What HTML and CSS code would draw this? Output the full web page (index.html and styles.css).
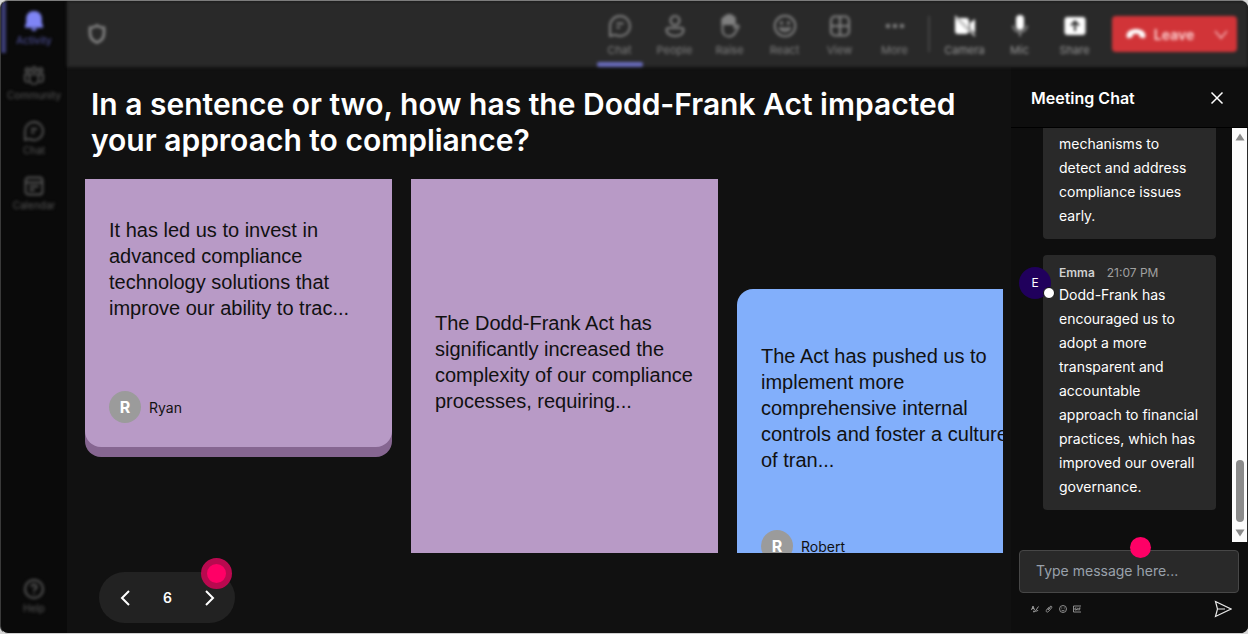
FILE: index.html
```
<!DOCTYPE html>
<html lang="en">
  <head>
    <meta charset="UTF-8" />
    <meta name="viewport" content="width=device-width, initial-scale=1.0" />
    <title>Meeting</title>
    <link rel="stylesheet" href="styles.css">
  </head>
  <body>
    <div class="app">
      <nav class="sidebar">
        <button class="nav-item active">
          <svg class="icon" viewBox="0 0 20 20" fill="currentColor"><path d="M10 0C5.200 0 2.200 3.500 2.200 7.500v4.300L.9 15.300c-.3.800.1 1.400.9 1.400h16.400c.8 0 1.200-.6.9-1.400L17.800 11.800V7.500C17.800 3.500 14.800 0 10 0zM7 17.500c.4 1.600 1.500 2.500 3 2.500s2.600-.9 3-2.500z"/></svg>
          <span>Activity</span>
        </button>
        <button class="nav-item">
          <svg class="icon" viewBox="0 0 20 20" fill="none" stroke="currentColor" stroke-width="1.700"><circle cx="3.500" cy="4" r="2"/><circle cx="10" cy="3.500" r="2.300"/><circle cx="16.500" cy="4" r="2"/><path d="M5.500 8.500h9v5a4.500 4.500 0 0 1-9 0zM5.500 8.500H.8V13c0 2.500 2 3.500 4 3.200M14.500 8.500h4.700V13c0 2.500-2 3.500-4 3.200"/></svg>
          <span>Community</span>
        </button>
        <button class="nav-item">
          <svg class="icon" viewBox="0 0 20 20" fill="none" stroke="currentColor" stroke-width="1.800"><path d="M10 1a9 9 0 1 1-4.300 16.900L1 19V10A9 9 0 0 1 10 1zM7 8h6M7 11.500h3.500"/></svg>
          <span>Chat</span>
        </button>
        <button class="nav-item">
          <svg class="icon" viewBox="0 0 20 20" fill="none" stroke="currentColor" stroke-width="1.800"><rect x="1.500" y="1.500" width="17" height="17" rx="3"/><path d="M1.500 6.500h17M5.500 10.500h9M5.500 14h5"/></svg>
          <span>Calendar</span>
        </button>
        <button class="nav-item help">
          <svg class="icon" viewBox="0 0 20 20" fill="none" stroke="currentColor" stroke-width="2"><circle cx="10" cy="10" r="9"/><path d="M7.500 8a2.500 2.500 0 1 1 3.500 2.200c-.8.400-1 .9-1 1.800M10 13.800v1.500"/></svg>
          <span>Help</span>
        </button>
      </nav>

      <div class="main">
        <header class="toolbar">
          <svg class="shield" viewBox="0 0 20 20" fill="none" stroke="currentColor" stroke-width="2.600"><path d="M10 1.500c2 1.500 4.300 2.200 7 2.300V9c0 4.800-2.500 7.800-7 9.500C5.500 16.800 3 13.800 3 9V3.800c2.700-.1 5-.8 7-2.300z"/></svg>

          <button class="tool selected">
            <svg class="tool-icon" viewBox="0 0 24 24" fill="none" stroke="currentColor" stroke-width="2"><path d="M12 2a10 10 0 1 1-4.800 18.800L2 22V12A10 10 0 0 1 12 2zM8.500 9.500h7M8.500 13.500H12"/></svg>
            <span>Chat</span>
          </button>
          <button class="tool">
            <svg class="tool-icon" viewBox="0 0 24 24" fill="none" stroke="currentColor" stroke-width="2.200"><circle cx="12" cy="6.500" r="4.500"/><path d="M5.500 14h13c1.200 0 2 .8 2 2 0 3.800-3.500 6-8.500 6s-8.500-2.200-8.500-6c0-1.200.8-2 2-2z"/></svg>
            <span>People</span>
          </button>
          <button class="tool">
            <svg class="tool-icon" viewBox="0 0 24 24" fill="none" stroke="currentColor" stroke-width="2" stroke-linejoin="round"><path d="M4.500 12V5.500a1.500 1.500 0 0 1 3 0V3.500a1.500 1.500 0 0 1 3 0V2.800a1.500 1.500 0 0 1 3 0V4.500a1.500 1.500 0 0 1 3 0V14l2-2.200c1.200-1.200 2.800 0 2 1.400L17 19c-1.500 2.400-3.300 3.500-6 3.500-4 0-6.500-2.700-6.500-6.500z"/><path d="M4.500 5.500l3-3 3-1.500 3 .500 3 2.500V10h-12z" fill="currentColor"/></svg>
            <span>Raise</span>
          </button>
          <button class="tool">
            <svg class="tool-icon" viewBox="0 0 24 24" fill="none" stroke="currentColor" stroke-width="2"><circle cx="12" cy="12" r="10.300"/><path d="M7 14.500c2.500 3.500 7.500 3.500 10 0z"/><circle cx="8.500" cy="9" r=".8"/><circle cx="15.500" cy="9" r=".8"/></svg>
            <span>React</span>
          </button>
          <button class="tool">
            <svg class="tool-icon" viewBox="0 0 24 24" fill="none" stroke="currentColor" stroke-width="2.200"><rect x="3" y="2.500" width="18" height="19" rx="4"/><path d="M12 3v18M3 12h18"/></svg>
            <span>View</span>
          </button>
          <button class="tool">
            <svg class="tool-icon" viewBox="0 0 24 24" fill="currentColor"><circle cx="5" cy="12" r="2.300"/><circle cx="12" cy="12" r="2.300"/><circle cx="19" cy="12" r="2.300"/></svg>
            <span>More</span>
          </button>

          <div class="divider"></div>

          <button class="tool device">
            <svg class="tool-icon" viewBox="0 0 24 24" fill="currentColor"><path d="M5.500 4H13a3 3 0 0 1 3 3v7.500zM2 3.500 16 17.600A3 3 0 0 1 13 20H5a3 3 0 0 1-3-3zM17 9l5-4v14l-5-4z"/><path d="M2 2l20 20" stroke="currentColor" stroke-width="1.200"/></svg>
            <span>Camera</span>
          </button>
          <button class="tool device">
            <svg class="tool-icon" viewBox="0 0 24 24" fill="currentColor"><rect x="8" y="1" width="8" height="15" rx="4"/><path d="M5 11.500c0 4 3 6.500 7 6.500s7-2.500 7-6.500M12 18v4.500" fill="none" stroke="#a0a0a0" stroke-width="1.600"/></svg>
            <span>Mic</span>
          </button>
          <button class="tool device">
            <svg class="tool-icon" viewBox="0 0 24 24"><rect x="1.500" y="3" width="21" height="18" rx="3" fill="currentColor"/><path d="M12 17V8M8 11.500l4-4 4 4" fill="none" stroke="#292929" stroke-width="2"/></svg>
            <span>Share</span>
          </button>

          <div class="leave-group">
            <button class="leave">
              <svg class="phone" viewBox="0 0 20 12" fill="currentColor"><path d="M10 1c5 0 9 2.300 9.500 6 .2 1.800-.7 3.500-2.200 3.200l-2.600-.6c-.9-.2-1.400-.9-1.500-1.800L13 6.300c-2-.7-4-.7-6 0l-.2 1.500c-.1.900-.6 1.600-1.500 1.800l-2.600.6C1.200 10.500.3 8.800.5 7 1 3.300 5 1 10 1z"/></svg>
              <span>Leave</span>
            </button>
            <button class="leave-menu" aria-label="Leave options">
              <svg class="caret" viewBox="0 0 14 14" fill="none" stroke="currentColor" stroke-width="1.800"><path d="M1 4l6 7 6-7"/></svg>
            </button>
          </div>
        </header>

        <div class="content">
          <main class="stage">
            <h1>In a sentence or two, how has the Dodd-Frank Act impacted your approach to compliance?</h1>

            <div class="board">
              <article class="card card-ryan">
                <p>It has led us to invest in advanced compliance technology solutions that improve our ability to trac...</p>
                <div class="author"><span class="initial">R</span>Ryan</div>
              </article>
              <article class="card card-middle">
                <p>The Dodd-Frank Act has significantly increased the complexity of our compliance processes, requiring...</p>
              </article>
              <article class="card card-robert">
                <p>The Act has pushed us to implement more comprehensive internal controls and foster a culture of tran...</p>
                <div class="author"><span class="initial">R</span>Robert</div>
              </article>
            </div>

            <div class="pager">
              <button class="page-btn" aria-label="Previous">
                <svg class="chevron" viewBox="0 0 18 18" fill="none" stroke="currentColor" stroke-width="2"><path d="M13 2L6 9l7 7"/></svg>
              </button>
              <span class="page-number">6</span>
              <button class="page-btn" aria-label="Next">
                <svg class="chevron" viewBox="0 0 18 18" fill="none" stroke="currentColor" stroke-width="2"><path d="M5 2l7 7-7 7"/></svg>
              </button>
              <span class="hotspot ringed"></span>
            </div>
          </main>

          <aside class="chat">
            <div class="chat-header">
              <h2>Meeting Chat</h2>
              <button class="close-btn" aria-label="Close chat">
                <svg class="close-icon" viewBox="0 0 14 14" fill="none" stroke="currentColor" stroke-width="1.500"><path d="M1.500 1.500l11 11M12.500 1.500l-11 11"/></svg>
              </button>
            </div>

            <div class="chat-body">
              <div class="messages">
                <div class="bubble continued">
                  <p>mechanisms to detect and address compliance issues early.</p>
                </div>
                <div class="bubble">
                  <span class="chat-avatar">E<i class="status"></i></span>
                  <div class="meta"><b>Emma</b><span>21:07 PM</span></div>
                  <p>Dodd-Frank has encouraged us to adopt a more transparent and accountable approach to financial practices, which has improved our overall governance.</p>
                </div>
              </div>
              <div class="scrollbar">
                <svg class="arrow" viewBox="0 0 10 8" fill="currentColor"><path d="M5 0.500L9.500 7.500H.5z"/></svg>
                <div class="thumb"></div>
                <svg class="arrow" viewBox="0 0 10 8" fill="currentColor"><path d="M5 7.500L.5.500h9z"/></svg>
              </div>
            </div>

            <form class="composer">
              <div class="field">
                <input type="text" placeholder="Type message here..." aria-label="Message">
                <span class="hotspot"></span>
              </div>
              <div class="composer-tools">
                <button type="button" class="mini" aria-label="Format">
                  <svg class="mini-icon" viewBox="0 0 16 16" fill="none" stroke="currentColor" stroke-width="2"><path d="M1 10l3-8 3 8M2 7h4M15 3L8 13l-3 1 1-3M9 13c2-2 3 1 5-3"/></svg>
                </button>
                <button type="button" class="mini" aria-label="Attach">
                  <svg class="mini-icon" viewBox="0 0 16 16" fill="none" stroke="currentColor" stroke-width="1.800"><path d="M4 9l6-6c3-2 5 1 3 3l-6 7c-3 3-6 0-4-3l6-6M6 10l5-5"/></svg>
                </button>
                <button type="button" class="mini" aria-label="Emoji">
                  <svg class="mini-icon" viewBox="0 0 16 16" fill="none" stroke="currentColor" stroke-width="1.800"><circle cx="8" cy="8" r="7"/><path d="M4.500 9.500c2 3 5 3 7 0M4.500 6h2M9.500 6h2"/></svg>
                </button>
                <button type="button" class="mini" aria-label="GIF">
                  <svg class="mini-icon" viewBox="0 0 16 16" fill="none" stroke="currentColor" stroke-width="1.800"><path d="M16 2H1v12h15M7 6H4v4h3V8M9.500 5.500v5M12 11V6h3M12 8h2.500"/></svg>
                </button>
                <button class="send" aria-label="Send">
                  <svg class="send-icon" viewBox="0 0 18 18" fill="none" stroke="currentColor" stroke-width="1.200"><path d="M1.500 1.500L17 9 1.500 16.500l2-7.500zM3.500 9H11"/></svg>
                </button>
              </div>
            </form>
          </aside>
        </div>
      </div>
    </div>
  </body>
</html>
```
FILE: styles.css
```
* {
  box-sizing: border-box;
}
body {
  margin: 0;
  background-color: #d8d8d8;
  color: white;
  font-family: Inter, "Liberation Sans", sans-serif;
}
h1,
h2,
p {
  margin: 0;
}
button {
  padding: 0;
  border: none;
  background: none;
  color: inherit;
  font-family: inherit;
  cursor: pointer;
}
svg {
  display: block;
  flex: none;
}
.app {
  display: flex;
  height: 100vh;
  border-top: 1px solid #7c7c7c;
  border-left: 1px solid #3a3a3a;
  border-bottom: 1px solid #d0d0d0;
  border-radius: 8px;
  overflow: hidden;
  background-color: #0a0a0a;
}

/* the rail and toolbar are out of focus */
.sidebar,
.toolbar {
  filter: blur(1px) blur(1px);
}
.sidebar {
  width: 66px;
  flex: none;
  display: flex;
  flex-direction: column;
  padding-bottom: 9px;
}
.nav-item {
  height: 55px;
  display: flex;
  flex-direction: column;
  align-items: center;
  justify-content: center;
  gap: 2px;
  color: #585858;
  font-size: 10px;
  line-height: 14px;
}
.nav-item.active {
  height: 52px;
  margin-bottom: 3px;
  padding: 4px 5px 0 0;
  border-left: 5px solid #3d3e78;
  color: #5557a8;
}
.active .icon {
  color: #7f85f5;
}
.icon {
  width: 20px;
  height: 20px;
}
.help {
  margin-top: auto;
}

.main {
  flex: 1;
  min-width: 0;
  display: flex;
  flex-direction: column;
  background-color: #111;
}
.toolbar {
  height: 66px;
  flex: none;
  display: flex;
  align-items: center;
  padding: 0 11px 0 20px;
  background-color: #292929;
}
.shield {
  width: 20px;
  height: 20px;
  margin-right: auto;
  color: #8a8a8a;
}
.tool {
  width: 55px;
  height: 66px;
  display: flex;
  flex-direction: column;
  align-items: center;
  padding-top: 13px;
  gap: 4px;
  color: #808080;
  font-size: 11px;
  line-height: 16px;
}
.selected::after {
  content: "";
  width: 46px;
  height: 5px;
  flex: none;
  border-radius: 2px;
  background-color: #686bba;
}
.tool-icon {
  width: 24px;
  height: 24px;
}
.device {
  color: #989898;
}
.device .tool-icon {
  color: white;
}
.divider {
  width: 2px;
  height: 36px;
  margin: 0 7px 0 6px;
  background-color: #444;
}
.leave-group {
  display: flex;
  height: 36px;
  margin-left: 10px;
  border-radius: 4px;
  background-color: #d13438;
}
.leave {
  width: 92px;
  display: flex;
  align-items: center;
  justify-content: center;
  gap: 8px;
  padding-left: 4px;
  color: #ffd6d6;
  font-size: 14px;
  font-weight: 600;
}
.phone {
  width: 20px;
  height: 12px;
  color: white;
}
.leave-menu {
  width: 33px;
  display: flex;
  align-items: center;
  justify-content: center;
  color: #f0a5a7;
}
.caret {
  width: 14px;
  height: 14px;
}

.content {
  flex: 1;
  min-height: 0;
  display: flex;
}
.stage {
  flex: 1;
  min-width: 0;
  display: flex;
  flex-direction: column;
  padding: 19px 8px 10px 18px;
}
h1 {
  padding-left: 6px;
  font-size: 30px;
  font-weight: 600;
  line-height: 36px;
}
.board {
  flex: 1;
  min-height: 0;
  display: flex;
  gap: 19px;
  margin: 21px 0 19px;
  overflow: hidden;
}
.card {
  width: 307px;
  flex: none;
  display: flex;
  flex-direction: column;
  padding: 0 24px;
  background-color: #b89ac6;
  color: #111;
}
.card p {
  font-family: "Liberation Sans", Arial, sans-serif;
  font-size: 20px;
  line-height: 26px;
}
.card-ryan {
  align-self: flex-start;
  padding-top: 38px;
  padding-bottom: 24px;
  border-radius: 0 0 16px 16px;
  box-shadow: 0 10px #866691;
}
.card-middle {
  justify-content: center;
  padding-bottom: 8px;
}
.card-robert {
  margin-top: 110px;
  padding-top: 54px;
  border-radius: 16px 16px 0 0;
  background-color: #82affb;
}
.author {
  display: flex;
  align-items: center;
  gap: 8px;
  margin-top: 70px;
  font-size: 14px;
}
.card-robert .author {
  margin-top: 57px;
}
.initial {
  width: 32px;
  height: 32px;
  flex: none;
  border-radius: 50%;
  background-color: #9b9b9b;
  color: white;
  font-size: 16px;
  font-weight: 700;
  line-height: 32px;
  text-align: center;
}
.pager {
  position: relative;
  align-self: flex-start;
  display: flex;
  align-items: center;
  justify-content: space-between;
  width: 136px;
  height: 51px;
  margin-left: 14px;
  padding: 0 16px 0 17px;
  border-radius: 26px;
  background-color: #222;
}
.chevron {
  width: 18px;
  height: 18px;
}
.page-number {
  font-size: 14px;
  font-weight: 600;
}
.hotspot {
  position: absolute;
  top: -13px;
  left: 111px;
  width: 21px;
  height: 21px;
  border-radius: 50%;
  background-color: #ff0066;
}
.hotspot.ringed {
  top: -14px;
  left: 102px;
  width: 31px;
  height: 31px;
  border: 6px solid #b9094f;
}

.chat {
  width: 237px;
  flex: none;
  display: flex;
  flex-direction: column;
  background-color: #0e0e0e;
}
.chat-header {
  height: 61px;
  flex: none;
  display: flex;
  align-items: center;
  justify-content: space-between;
  padding: 2px 24px 0 20px;
  border-bottom: 1px solid black;
}
h2 {
  font-size: 16px;
  font-weight: 600;
  line-height: 24px;
}
.close-icon {
  width: 14px;
  height: 14px;
}
.chat-body {
  flex: 1;
  min-height: 0;
  display: flex;
}
.messages {
  flex: 1;
  display: flex;
  flex-direction: column;
  justify-content: flex-end;
  gap: 16px;
  padding: 0 16px 32px 32px;
  overflow: hidden;
}
.bubble {
  position: relative;
  padding: 8px 16px 11px;
  border-radius: 4px;
  background-color: #292929;
  font-size: 14px;
  line-height: 24px;
}
.bubble.continued {
  padding-top: 4px;
  border-radius: 0 0 4px 4px;
}
.meta {
  display: flex;
  gap: 12px;
  color: #a0a0a0;
  font-size: 12px;
  line-height: 20px;
}
.meta b {
  color: #d0d0d0;
  font-weight: 600;
}
.chat-avatar {
  position: absolute;
  top: 12px;
  left: -24px;
  width: 32px;
  height: 32px;
  border-radius: 50%;
  background-color: #20005c;
  font-size: 12px;
  line-height: 32px;
  text-align: center;
}
.status {
  position: absolute;
  right: -4px;
  bottom: 0;
  width: 12px;
  height: 12px;
  border: 1px solid #111;
  border-radius: 50%;
  background-color: white;
}
.scrollbar {
  width: 16px;
  display: flex;
  flex-direction: column;
  align-items: center;
  justify-content: space-between;
  padding: 5px 0;
  border-right: 1px solid #2a2a2a;
  background-color: #fcfcfc;
  color: #8b8b8b;
}
.arrow {
  width: 10px;
  height: 8px;
}
.thumb {
  width: 8px;
  height: 62px;
  margin: auto 0 7px;
  border-radius: 4px;
  background-color: #8b8b8b;
}
.composer {
  padding: 8px 9px 15px 8px;
}
.field {
  position: relative;
}
.field input {
  display: block;
  width: 100%;
  height: 43px;
  padding: 0 16px 2px;
  border: 1px solid #474747;
  border-radius: 4px;
  background-color: #292929;
  color: white;
  font-family: inherit;
  font-size: 14px;
}
.field input::placeholder {
  color: #99a1ab;
}
.composer-tools {
  display: flex;
  align-items: center;
  gap: 6px;
  padding: 7px 7px 0 12px;
  color: #9a9a9a;
}
.mini-icon {
  width: 8px;
  height: 8px;
}
.send {
  margin-left: auto;
  color: #e8e8e8;
}
.send-icon {
  width: 18px;
  height: 18px;
}
```
